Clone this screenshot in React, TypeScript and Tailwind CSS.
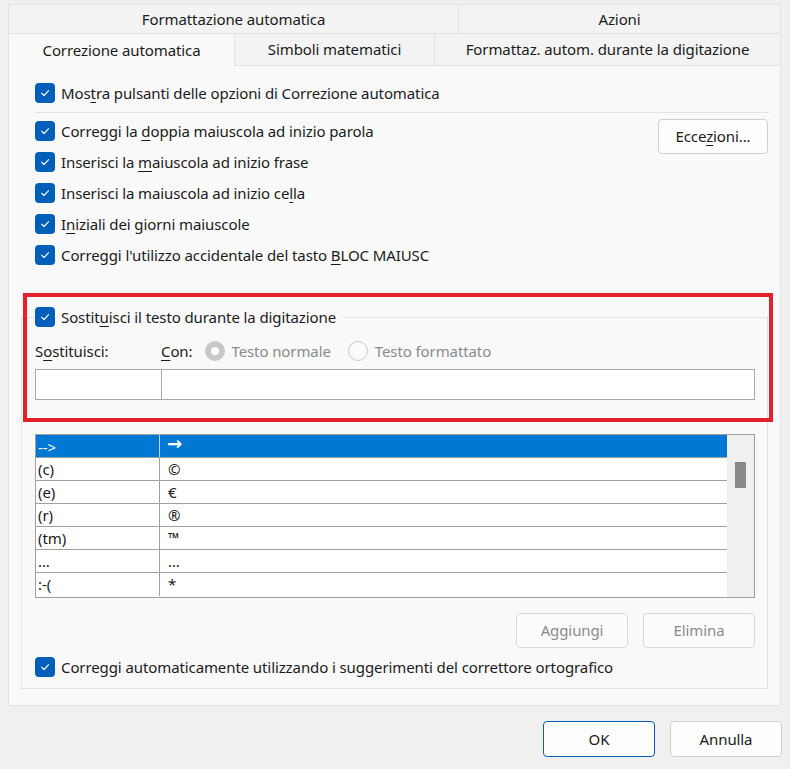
import React from 'react';

const font = { fontFamily: '"Noto Sans", "Open Sans", sans-serif' };

const Check = () => (
  <span className="flex h-[20px] w-[20px] shrink-0 items-center justify-center rounded-[4px] bg-[#005fb8]">
    <svg width="12" height="12" viewBox="0 0 12 12">
      <path d="M2.6 6.2 5 8.5 9.6 3.7" fill="none" stroke="white" strokeWidth="1.1" strokeLinecap="round" strokeLinejoin="round" />
    </svg>
  </span>
);

const U = ({ children }: { children: React.ReactNode }) => (
  <span className="underline decoration-1 underline-offset-[3px]">{children}</span>
);

const Row = ({ children }: { children: React.ReactNode }) => (
  <div className="flex h-[20px] items-center gap-[6px]">
    <Check />
    <span className="leading-[20px]">{children}</span>
  </div>
);

const entries = [
  ['(c)', '©'],
  ['(e)', '€'],
  ['(r)', '®'],
  ['(tm)', '™'],
  ['...', '…'],
  [':-(', '*'],
];

export default function App() {
  return (
    <div
      className="relative flex h-[769px] w-[790px] flex-col overflow-hidden bg-[#f0f0f0] pl-[8px] pr-[9px] pt-[4px] text-[15px] tracking-[-0.1px] text-[#1b1b1b]"
      style={font}
    >
      {/* tabs */}
      <div className="flex h-[30px]">
        <div className="flex w-[450px] items-center justify-center border border-r-0 border-[#e3e3e3] bg-[#f3f3f3]">Formattazione automatica</div>
        <div className="flex flex-1 items-center justify-center border border-[#e3e3e3] bg-[#f3f3f3]">Azioni</div>
      </div>
      <div className="flex h-[31px]">
        <div className="relative z-10 -mb-px flex w-[227px] items-center justify-center border-x border-[#e3e3e3] bg-[#f9f9f9]">Correzione automatica</div>
        <div className="flex w-[200px] items-center justify-center border-r border-[#e3e3e3] bg-[#f3f3f3]">Simboli matematici</div>
        <div className="flex flex-1 items-center justify-center border-r border-[#e3e3e3] bg-[#f3f3f3]">Formattaz. autom. durante la digitazione</div>
      </div>

      {/* panel */}
      <div className="flex h-[641px] flex-col border border-[#e3e3e3] bg-[#f9f9f9] pt-[17px]">
        <div className="pl-[26px]">
          <Row>
            Mos<U>t</U>ra pulsanti delle opzioni di Correzione automatica
          </Row>
        </div>
        <div className="ml-[26px] mr-[11px] mt-[9px] h-px bg-[#e3e3e3]" />

        <div className="flex justify-between pl-[26px] pr-[12px]">
          <div className="flex flex-col gap-[11px] pt-[8px]">
            <Row>
              Correggi la <U>d</U>oppia maiuscola ad inizio parola
            </Row>
            <Row>
              Inserisci la <U>m</U>aiuscola ad inizio frase
            </Row>
            <Row>
              Inserisci la maiuscola ad inizio ce<U>l</U>la
            </Row>
            <Row>
              I<U>n</U>iziali dei giorni maiuscole
            </Row>
            <Row>
              Correggi l'utilizzo accidentale del tasto <U>B</U>LOC MAIUSC
            </Row>
          </div>
          <button className="mt-[6px] h-[35px] w-[110px] rounded-[4px] border border-[#d0d0d0] bg-[#fdfdfd]">
            Ecce<U>z</U>ioni...
          </button>
        </div>

        <fieldset className="mx-[12px] mt-[42px] border border-[#e3e3e3] pb-[11px] pl-[13px] pr-[12px]">
          <legend className="pr-[6px]">
            <Row>
              Sostit<U>u</U>isci il testo durante la digitazione
            </Row>
          </legend>

          <div className="mt-[14px] flex h-[20px] items-center">
            <span className="w-[126px]">
              S<U>o</U>stituisci:
            </span>
            <span>
              <U>C</U>on:
            </span>
            <span className="ml-[13px] flex h-[20px] w-[20px] items-center justify-center rounded-full bg-[#c8c8c8]">
              <span className="h-[8px] w-[8px] rounded-full bg-white" />
            </span>
            <span className="ml-[6px] text-[#8a8a8a]">Testo normale</span>
            <span className="ml-[17px] h-[20px] w-[20px] rounded-full border border-[#c8c8c8] bg-[#fbfbfb]" />
            <span className="ml-[7px] text-[#8a8a8a]">Testo formattato</span>
          </div>

          <div className="mt-[8px] flex h-[31px]">
            <div className="w-[126px] border border-r-0 border-[#a8a8a8] bg-white" />
            <div className="flex-1 border border-[#a8a8a8] bg-white" />
          </div>

          <div className="mt-[34px] flex h-[164px] border border-[#a0a0a0] bg-white">
            <div className="flex flex-1 flex-col">
              <div className="flex h-[23px] border-b border-[#a0a0a0] bg-[#0078d4] text-white">
                <div className="w-[124px] border-r border-[#c8d8ec] pl-[2px] pt-[3px] leading-[18px]">--&gt;</div>
                <div className="pl-[7px] font-['DejaVu_Sans',sans-serif] text-[18px] font-bold leading-[18px]">→</div>
              </div>
              {entries.map(([a, b], i) => (
                <div key={i} className={`flex h-[23px] ${i < entries.length - 1 ? 'border-b' : ''} border-[#a0a0a0]`}>
                  <div className="w-[124px] border-r border-[#a0a0a0] pl-[2px] leading-[22px]">{a}</div>
                  <div className="pl-[8px] leading-[22px]">{b}</div>
                </div>
              ))}
            </div>
            <div className="w-[27px] bg-[#f0f0f0] pl-[8px] pt-[27px]">
              <div className="h-[26px] w-[11px] bg-[#888888]" />
            </div>
          </div>

          <div className="mt-[15px] flex justify-end gap-[15px]">
            <button className="h-[35px] w-[112px] rounded-[4px] border border-[#d9d9d9] bg-[#fbfbfb] text-[#8a8a8a]">Aggiungi</button>
            <button className="h-[35px] w-[112px] rounded-[4px] border border-[#d9d9d9] bg-[#fbfbfb] text-[#8a8a8a]">Elimina</button>
          </div>

          <div className="mt-[9px]">
            <Row>Correggi automaticamente utilizzando i suggerimenti del correttore ortografico</Row>
          </div>
        </fieldset>
      </div>

      {/* footer */}
      <div className="flex justify-end gap-[15px] pr-0 pt-[15px]">
        <button className="h-[36px] w-[112px] rounded-[4px] border border-[#005fb8] bg-[#fdfdfd]">OK</button>
        <button className="-mr-[1px] h-[36px] w-[112px] rounded-[4px] border border-[#d0d0d0] bg-[#fdfdfd]">Annulla</button>
      </div>

      {/* annotation */}
      <div className="pointer-events-none absolute left-[23px] top-[293px] h-[129px] w-[750px] border-4 border-[#e3202b]" />
    </div>
  );
}
